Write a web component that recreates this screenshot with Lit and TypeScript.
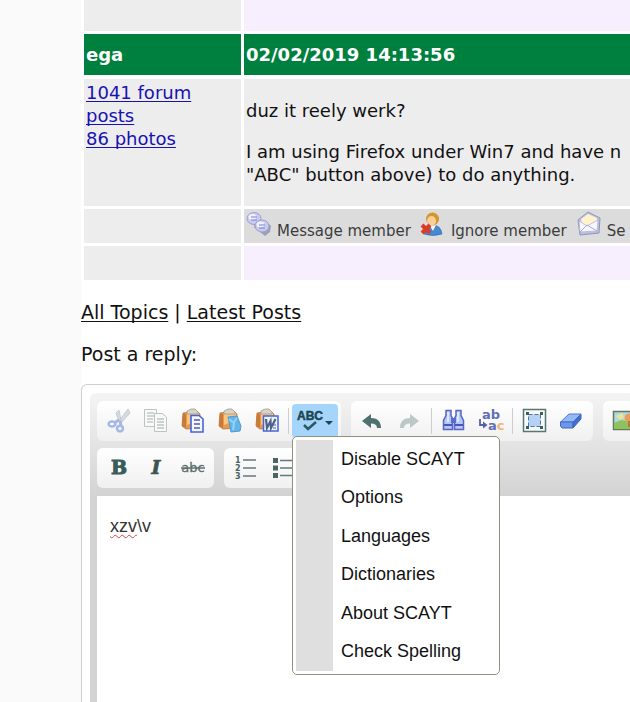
import { LitElement, html, css, svg, nothing } from "lit";
import { customElement, property, state } from "lit/decorators.js";

const clipboard = svg`
  <path d="M3 5 L17 3 L20 6 L20 20 L6 21 L2 18Z" fill="#e79a4b" stroke="#b9733a" stroke-width=".8"/>
  <path d="M3 5 L6 6 L6 20 L2 18Z" fill="#c87a38"/>
  <path d="M7 6 L19 5 L19 12 L7 17Z" fill="#f8c583"/>
  <path d="M7 5 V3 L11 1 H15 L18 4 V6 H7Z" fill="#d8d3c4" stroke="#a59d8e" stroke-width=".8"/>`;

const icons: Record<string, unknown> = {
  cut: svg`
    <path d="M13 2 L15 12 L13 14 L10 5Z M22 1 L24 5 L16 14 L13 13Z" fill="#d6dade" stroke="#bfc5cb" stroke-width=".8"/>
    <path d="M13 12 L8 15 M14 13 L15 18" stroke="#a5b6df" stroke-width="3"/>
    <ellipse cx="6" cy="16" rx="3.4" ry="2.5" fill="none" stroke="#a5b8e6" stroke-width="2.6"/>
    <ellipse cx="14" cy="20.500" rx="3" ry="2.800" fill="none" stroke="#a5b8e6" stroke-width="2.6"/>`,
  copy: svg`
    <path d="M1.500 1.500 H13.500 V18.500 H1.500Z" fill="#f8f9f9" stroke="#bcc4c3"/>
    <path d="M4 5h7M4 8h7M4 11h6M4 14h6" stroke="#c2cac9" stroke-width="1.300"/>
    <path d="M11.500 5.500 H19 L23.500 9 V23.500 H11.500Z" fill="#f8f9f9" stroke="#bcc4c3"/>
    <path d="M14 11h7M14 14h7M14 17h7M14 20h7" stroke="#bcc4c3" stroke-width="1.300"/>`,
  paste: svg`${clipboard}
    <path d="M11 7.500 H19 L23 11 V24 H11Z" fill="#f4f6ff" stroke="#4266d8" stroke-width="1.600"/>
    <path d="M14 12h6M14 16h6M14 20h6" stroke="#5a58a8" stroke-width="1.500"/>`,
  pasteText: svg`${clipboard}
    <path d="M11 9 L20 8 L24 18 L23 23 L14 24Z" fill="#63b4e8" stroke="#4f9ad2"/>
    <path d="M12 11 L17 15 L16 22 M17 14 L20 10" stroke="#93d3f3" stroke-width="2" fill="none"/>`,
  pasteWord: svg`${clipboard}
    <path d="M9.500 8 H24 V23 H9.500Z" fill="#eef2fb" stroke="#4266d8" stroke-width="1.500"/>
    <path d="M12 11 L13 20 L16.500 13 L17 20 L21.500 11" stroke="#4d6288" stroke-width="2.200" fill="none"/>
    <path d="M19 17h3M19 20h3" stroke="#4d6288"/>`,
  undo: svg`<path d="M2 13 L11 6 V10 C17 10 21 13 21 20 H17 C17 17 15 15.500 11 15.500 V20Z" fill="#4f716f"/>`,
  redo: svg`<path d="M22 13 L13 6 V10 C7 10 3 13 3 20 H7 C7 17 9 15.500 13 15.500 V20Z" fill="#bcc8c8"/>`,
  find: svg`
    <path d="M5 2.500 h5 v5 l1.500 3 v11 h-9 v-9 l2.500 -5Z M15 2.500 h5 v5 l2.500 5 v9 h-9 v-11 l1.500 -3Z" fill="#b3c9f7" stroke="#5b63c4" stroke-width="1.500"/>
    <path d="M10 10h5v5h-5z" fill="#5f6acb"/>
    <path d="M3 17h8M14 17h8" stroke="#4d55b6" stroke-width="2"/>
    <path d="M7 4v10M17 4v10" stroke="#eaf3ff" stroke-width="1.500"/>`,
  replace: svg`
    <text x="4" y="11" font-family="DejaVu Sans, sans-serif" font-weight="bold" font-size="13" fill="#6170b5">ab</text>
    <text x="10" y="22" font-family="DejaVu Sans, sans-serif" font-weight="bold" font-size="13" fill="#6170b5">a<tspan fill="#f2b673">c</tspan></text>
    <path d="M2 11 V17 H8" fill="none" stroke="#5560ac" stroke-width="1.800"/>
    <path d="M5 13.500 L9.500 17 L5 20.500Z" fill="#5560ac"/>`,
  select: svg`
    <path d="M1.500 1.500 h22 v22 h-22Z" fill="#f6faf9" stroke="#5a7674" stroke-width="1.500"/>
    <path d="M6.500 6.500 h12 v12 h-12Z" fill="#b5d1f6" stroke="#557592" stroke-dasharray="4 2"/>
    <path d="M4 4h3v3H4zM18 4h3v3h-3zM4 18h3v3H4zM18 18h3v3h-3z" fill="#3f5c5a"/>`,
  eraser: svg`
    <path d="M1.500 14 L10 6 H22 L14 14Z" fill="#94baf5" stroke="#5078cf"/>
    <path d="M1.500 14 H14 V20 H3 L1.500 18Z" fill="#6c98ea" stroke="#4267c0"/>
    <path d="M14 14 L22 6 V11 L14 20Z" fill="#3f6ed0" stroke="#4267c0"/>`,
  image: svg`
    <path d="M1.500 3.500 h23 v18 h-23Z" fill="#a9dbe9" stroke="#66795a" stroke-width="1.500"/>
    <path d="M2 15 L9 12 L24 15 V21 H2Z" fill="#8fc25e"/>
    <path d="M4 8 L10 5 L12 9 L8 12Z" fill="#f8e389"/>
    <circle cx="17" cy="10" r="4.500" fill="#e99f58"/><path d="M16 13h2v6h-2z" fill="#b8763c"/>`,
  bold: svg`<text x="13" y="19" text-anchor="middle" font-family="DejaVu Serif, serif" font-weight="bold" font-size="19" fill="#3a5c58" stroke="#3a5c58" stroke-width="1">B</text>`,
  italic: svg`<text x="13" y="19" text-anchor="middle" font-family="DejaVu Serif, serif" font-weight="bold" font-style="italic" font-size="19" fill="#3d5351" stroke="#3d5351" stroke-width=".7">I</text>`,
  strike: svg`
    <text x="13" y="17" text-anchor="middle" font-family="DejaVu Sans, sans-serif" font-size="13" fill="#5b6f6d" stroke="#5b6f6d" stroke-width=".3">abc</text>
    <path d="M1 13h24" stroke="#5b6f6d" stroke-width="1.500"/>`,
  ordered: svg`
    <g font-family="DejaVu Sans, sans-serif" font-weight="bold" font-size="8" fill="#4a6260">
      <text x="2" y="8">1</text><text x="2" y="16">2</text><text x="2" y="24">3</text></g>
    <path d="M10 5h13M10 13h13M10 21h13" stroke="#627a78" stroke-width="1.500"/>`,
  bullets: svg`
    <path d="M3 3h5v5H3zM3 10.500h5v5H3zM3 18h5v5H3z" fill="#4a6663"/>
    <path d="M10 5.500h13M10 13h13M10 20.500h13" stroke="#627a78" stroke-width="1.500"/>`,
  message: svg`
    <path d="M9 9 L20 10 L25 15 L24 21 L19 25 L8 16Z" fill="#8b8ba6" opacity=".75"/>
    <ellipse cx="8" cy="7.500" rx="7" ry="6" fill="#c9caf2" stroke="#9c9fd2"/>
    <ellipse cx="6.500" cy="6" rx="4" ry="3" fill="#f0f1ff"/>
    <path d="M5 6h6M5 9h6" stroke="#7d80c4" stroke-width="1.200"/>
    <ellipse cx="16" cy="15" rx="7" ry="6" fill="#c9caf2" stroke="#9c9fd2"/>
    <ellipse cx="14.500" cy="13.500" rx="4" ry="3" fill="#f0f1ff"/>
    <path d="M13 14h6M13 17h6" stroke="#7d80c4" stroke-width="1.200"/>`,
  ignore: svg`
    <path d="M4 23 Q5 14 12 14 Q21 14 22 23 Q13 26 4 23Z" fill="#4288d5" stroke="#3a6fae" stroke-width=".7"/>
    <circle cx="12.500" cy="8" r="6.500" fill="#d49430"/>
    <ellipse cx="11.500" cy="10" rx="4.500" ry="5" fill="#f8cf96"/>
    <path d="M10 15 L13 20 L16 14Z" fill="#fff3df"/>
    <path d="M2 14 L10 22 M10 14 L2 22" stroke="#d93c28" stroke-width="4"/>`,
  mail: svg`
    <path d="M2 9 L12 1 L24 7 L23 22 L4 24Z" fill="#bfc0de" stroke="#9193bd"/>
    <path d="M5 8 L12 3 L21 7 L20 14 H6Z" fill="#fff2cc"/>
    <path d="M3 10 L11 15 L22 9 L21 20 L4 21Z" fill="#f6f7ff" stroke="#b4b6da" stroke-width=".8"/>
    <path d="M4 21 L11 14 L21 20" fill="none" stroke="#a8aad0"/>`,
};

@customElement("tool-icon")
class ToolIcon extends LitElement {
  @property() name = "";
  static styles = css`
    :host { display: block; flex: none; }
    svg { display: block; width: 26px; height: 26px; }
  `;
  render() {
    return html`<svg viewBox="0 0 26 26" aria-hidden="true">${icons[this.name]}</svg>`;
  }
}

@customElement("spell-menu")
class SpellMenu extends LitElement {
  @state() open = true;
  static styles = css`
    :host { display: block; position: relative; z-index: 2; }
    .trigger {
      display: flex; align-items: center; width: 46px; height: 34px; padding: 0 4px;
      border: 0; border-radius: 4px; background: #a5d5fb;
    }
    .trigger svg { display: block; width: 38px; height: 26px; }
    .menu {
      position: absolute; top: calc(100% - 2px); left: 0; box-sizing: border-box;
      width: 208px; padding: 3px; border: 1px solid #90907e; border-radius: 5px; background: #fff;
    }
    .list { display: grid; grid-auto-rows: 1fr; height: 231px; margin: 0; padding: 0; list-style: none; border-left: 37px solid #dfdfdf; }
    .list li { display: flex; }
    .list button {
      flex: 1; padding: 0 8px; border: 0; background: none; color: #111; text-align: left;
      font: 18px "Liberation Sans", Arial, sans-serif; white-space: nowrap;
    }
  `;
  render() {
    const items = ["Disable SCAYT", "Options", "Languages", "Dictionaries", "About SCAYT", "Check Spelling"];
    return html`
      <button class="trigger" aria-label="Spell check as you type" aria-expanded=${this.open}
        @click=${() => (this.open = !this.open)}>
        <svg viewBox="0 0 38 26" aria-hidden="true">
          <text x="1" y="12" font-family="Liberation Sans, sans-serif" font-weight="bold" font-size="12" fill="#1c4650" stroke="#1c4650" stroke-width=".5">ABC</text>
          <path d="M8 17 L12 21 L20 14" fill="none" stroke="#2d5862" stroke-width="2.500"/>
          <path d="M29 13 H37 L33 17Z" fill="#1f4454"/>
        </svg>
      </button>
      ${this.open
        ? html`<div class="menu"><ul class="list">${items.map((t) => html`<li><button>${t}</button></li>`)}</ul></div>`
        : nothing}
    `;
  }
}

type Tool = [string, string] | "sep" | "spell";

@customElement("reply-editor")
class ReplyEditor extends LitElement {
  static styles = css`
    :host { display: flex; flex-direction: column; }
    .frame {
      flex: 1; display: flex; flex-direction: column; margin-right: -16px; padding: 8px 8px 0;
      border: 1px solid #cfcfcf; border-bottom: 0; border-radius: 6px 6px 0 0; background: #fff;
    }
    .shell { flex: 1; display: flex; flex-direction: column; padding: 0 7px; border-radius: 6px 6px 0 0; background: linear-gradient(#f4f4f4, #d3d3d3 103px); }
    .bars { display: flex; flex-direction: column; gap: 7px; padding: 8px 0; }
    .bar { display: flex; gap: 10px; }
    .group { display: flex; align-items: center; flex: none; padding: 3px; border-radius: 6px; background: linear-gradient(#fff, #f0f0f0); }
    .tool { display: grid; place-items: center; width: 37px; height: 34px; padding: 0; border: 0; background: none; }
    .sep { width: 1px; height: 26px; margin: 0 3px; background: #cdcdcd; }
    .page { flex: 1; padding: 20px 13px; background: #fff; color: #333; font: 18px/20px "Liberation Sans", Arial, sans-serif; outline: none; }
    .typo { text-decoration: underline wavy #d04848 1px; text-underline-offset: 2px; text-decoration-skip-ink: none; }
  `;
  private rows: Tool[][][] = [
    [
      [["cut", "Cut"], ["copy", "Copy"], ["paste", "Paste"], ["pasteText", "Paste as plain text"], ["pasteWord", "Paste from Word"], "sep", "spell"],
      [["undo", "Undo"], ["redo", "Redo"], "sep", ["find", "Find"], ["replace", "Replace"], "sep", ["select", "Select all"], ["eraser", "Remove format"]],
      [["image", "Image"]],
    ],
    [
      [["bold", "Bold"], ["italic", "Italic"], ["strike", "Strike through"]],
      [["ordered", "Numbered list"], ["bullets", "Bulleted list"]],
    ],
  ];
  private tool(t: Tool) {
    if (t === "sep") return html`<span class="sep"></span>`;
    if (t === "spell") return html`<spell-menu></spell-menu>`;
    return html`<button class="tool" aria-label=${t[1]}><tool-icon name=${t[0]}></tool-icon></button>`;
  }
  render() {
    return html`
      <div class="frame"><div class="shell">
        <div class="bars">
          ${this.rows.map((r) => html`<div class="bar">${r.map((g) => html`<div class="group">${g.map((t) => this.tool(t))}</div>`)}</div>`)}
        </div>
        <div class="page" contenteditable="true" role="textbox" aria-multiline="true" aria-label="Reply" spellcheck="false"><span class="typo">xzv</span>\\v</div>
      </div></div>
    `;
  }
}

@customElement("app-root")
class AppRoot extends LitElement {
  static styles = css`
    :host {
      display: flex; min-height: 100vh; overflow: hidden; background: #fafafa; color: #111;
      font: 18px/23px Verdana, "DejaVu Sans", sans-serif;
    }
    main { flex: 1; min-width: 0; display: flex; flex-direction: column; margin-left: 81px; background: #fff; }
    a { color: inherit; text-decoration-thickness: 1px; text-underline-offset: 2px; text-decoration-skip-ink: none; }
    .posts { table-layout: fixed; width: calc(100% + 3px); border-spacing: 3px; margin-top: -3px; }
    td, th { padding: 2px; background: #ededed; text-align: left; white-space: nowrap; overflow: hidden; }
    .who { width: 153px; white-space: normal; vertical-align: top; }
    .who a { color: #1812b4; }
    .head th { height: 37px; border-bottom: 1px solid #fff; background: #00803f; color: #fff; vertical-align: middle; }
    .posts .note { background: #f7effe; }
    .spacer td { height: 27px; }
    p { margin: 18px 0; }
    .posts .actions { background: #dcdcdc; }
    .links { display: flex; align-items: flex-start; gap: 9px; height: 30px; font-size: 15px; }
    .links a { display: flex; align-items: flex-start; gap: 5px; color: #3c3c3c; text-decoration: none; }
    .label { padding-top: 10px; line-height: 20px; }
    .below { display: flex; flex-direction: column; gap: 19px; padding: 18px 0; font-size: 19px; }
    reply-editor { flex: 1; }
  `;
  render() {
    const actions = [["message", "Message member"], ["ignore", "Ignore member"], ["mail", "Se"]];
    return html`
      <main>
        <table class="posts">
          <tr class="spacer"><td class="who"></td><td class="note"></td></tr>
          <tr class="head"><th class="who">ega</th><th>02/02/2019 14:13:56</th></tr>
          <tr>
            <td class="who"><a href="#posts">1041 forum posts</a><br /><a href="#photos">86 photos</a></td>
            <td>
              <p>duz it reely werk?</p>
              <p>I am using Firefox under Win7 and have n<br />"ABC" button above) to do anything.</p>
            </td>
          </tr>
          <tr>
            <td class="who"></td>
            <td class="actions"><div class="links">
              ${actions.map(([i, t]) => html`<a href="#${i}"><tool-icon name=${i}></tool-icon><span class="label">${t}</span></a>`)}
            </div></td>
          </tr>
          <tr><td class="who"></td><td class="note"><div class="links"></div></td></tr>
        </table>
        <div class="below">
          <div><a href="#topics">All Topics</a> | <a href="#latest">Latest Posts</a></div>
          <div>Post a reply:</div>
        </div>
        <reply-editor></reply-editor>
      </main>
    `;
  }
}
